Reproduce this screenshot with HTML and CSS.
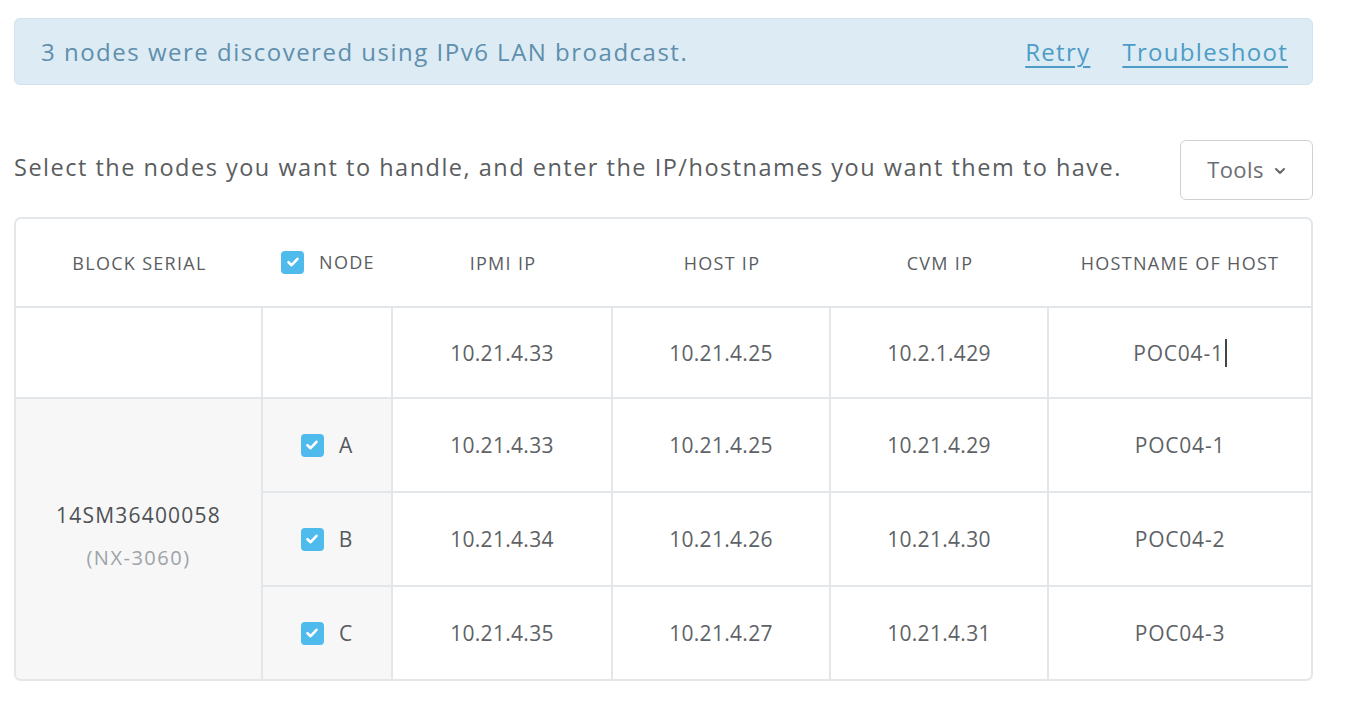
FILE: index.html
```html
<!DOCTYPE html>
<html>
<head>
<meta charset="utf-8">
<link rel="stylesheet" href="styles.css">
</head>
<body>
<div class="page">
  <div class="banner">
    <span class="banner-text">3 nodes were discovered using IPv6 LAN broadcast.</span>
    <div class="banner-links">
      <a class="link" href="#">Retry</a>
      <a class="link" href="#">Troubleshoot</a>
    </div>
  </div>
  <div class="toolbar">
    <p class="intro">Select the nodes you want to handle, and enter the IP/hostnames you want them to have.</p>
    <button class="tools-btn">Tools
      <svg class="chev" width="12" height="8" viewBox="0 0 12 8"><path d="M2 2 L6 6 L10 2" fill="none" stroke="#666" stroke-width="2" stroke-linecap="round" stroke-linejoin="round"/></svg>
    </button>
  </div>
  <div class="table-wrap">
    <table class="nodes">
      <colgroup>
        <col class="c-block"><col class="c-node"><col class="c-ipmi"><col class="c-host"><col class="c-cvm"><col class="c-name">
      </colgroup>
      <thead>
        <tr>
          <th>BLOCK SERIAL</th>
          <th><span class="node-head"><span class="cb"><svg width="16" height="16" viewBox="0 0 16 16"><path d="M3.5 8.2 L6.6 11.2 L12.5 4.8" fill="none" stroke="#fff" stroke-width="2.6" stroke-linecap="round" stroke-linejoin="round"/></svg></span>NODE</span></th>
          <th>IPMI IP</th>
          <th>HOST IP</th>
          <th>CVM IP</th>
          <th>HOSTNAME OF HOST</th>
        </tr>
      </thead>
      <tbody>
        <tr class="first">
          <td></td>
          <td></td>
          <td class="ip">10.21.4.33</td>
          <td class="ip">10.21.4.25</td>
          <td class="ip">10.2.1.429</td>
          <td class="last"><span class="editing">POC04-1</span></td>
        </tr>
        <tr>
          <td class="block" rowspan="3"><div class="serial">14SM36400058</div><div class="model">(NX-3060)</div></td>
          <td class="node"><span class="node-cell"><span class="cb"><svg width="16" height="16" viewBox="0 0 16 16"><path d="M3.5 8.2 L6.6 11.2 L12.5 4.8" fill="none" stroke="#fff" stroke-width="2.6" stroke-linecap="round" stroke-linejoin="round"/></svg></span>A</span></td>
          <td class="ip">10.21.4.33</td>
          <td class="ip">10.21.4.25</td>
          <td class="ip">10.21.4.29</td>
          <td class="last">POC04-1</td>
        </tr>
        <tr>
          <td class="node"><span class="node-cell"><span class="cb"><svg width="16" height="16" viewBox="0 0 16 16"><path d="M3.5 8.2 L6.6 11.2 L12.5 4.8" fill="none" stroke="#fff" stroke-width="2.6" stroke-linecap="round" stroke-linejoin="round"/></svg></span>B</span></td>
          <td class="ip">10.21.4.34</td>
          <td class="ip">10.21.4.26</td>
          <td class="ip">10.21.4.30</td>
          <td class="last">POC04-2</td>
        </tr>
        <tr class="bottom">
          <td class="node"><span class="node-cell"><span class="cb"><svg width="16" height="16" viewBox="0 0 16 16"><path d="M3.5 8.2 L6.6 11.2 L12.5 4.8" fill="none" stroke="#fff" stroke-width="2.6" stroke-linecap="round" stroke-linejoin="round"/></svg></span>C</span></td>
          <td class="ip">10.21.4.35</td>
          <td class="ip">10.21.4.27</td>
          <td class="ip">10.21.4.31</td>
          <td class="last">POC04-3</td>
        </tr>
      </tbody>
    </table>
  </div>
</div>
</body>
</html>
```

FILE: styles.css
```css
html, body {
  margin: 0;
  padding: 0;
  background: #ffffff;
}
body {
  font-family: "Open Sans", Lato, "Liberation Sans", sans-serif;
  color: #555a5e;
}
.page {
  width: 1299px;
  padding: 18px 0 0 14px;
}
.banner {
  box-sizing: border-box;
  height: 67px;
  display: flex;
  align-items: center;
  justify-content: space-between;
  padding: 0 24px 0 26px;
  background: #dcebf4;
  border: 1px solid #cfe4f0;
  border-radius: 6px;
}
.banner-text {
  font-size: 24px;
  color: #5f8fac;
  letter-spacing: 1.5px;
}
.banner-links {
  display: flex;
  gap: 32px;
}
.link {
  font-size: 24px;
  color: #4d9cc6;
  letter-spacing: 1.3px;
  text-decoration: underline;
  text-decoration-thickness: 2px;
  text-underline-offset: 5px;
}
.toolbar {
  display: flex;
  align-items: center;
  justify-content: space-between;
  margin-top: 55px;
  height: 60px;
}
.intro {
  margin: 0;
  font-size: 23.5px;
  color: #5a5d60;
  letter-spacing: 1.5px;
  position: relative;
  top: -3px;
}
.tools-btn {
  box-sizing: border-box;
  width: 133px;
  height: 60px;
  background: #fff;
  border: 1.5px solid #cdd2d7;
  border-radius: 6px;
  font-family: inherit;
  font-size: 22px;
  letter-spacing: 0.4px;
  color: #6a6e72;
  display: flex;
  align-items: center;
  justify-content: center;
  gap: 10px;
  padding: 0 0 2px 0;
}
.chev {
  margin-top: 4px;
}
.table-wrap {
  margin-top: 17px;
  border: 2px solid #e4e7ea;
  border-radius: 7px;
  overflow: hidden;
  width: 1295px;
  box-shadow: 0 1px 1px rgba(0,0,0,0.04);
}
.nodes {
  width: 100%;
  border-collapse: separate;
  border-spacing: 0;
  table-layout: fixed;
}
.c-block { width: 247px; }
.c-node { width: 130px; }
.c-ipmi { width: 220px; }
.c-host { width: 218px; }
.c-cvm { width: 218px; }
.c-name { width: 262px; }
.nodes th {
  height: 87px;
  font-weight: 400;
  font-size: 18px;
  color: #5a5d60;
  letter-spacing: 1.3px;
  text-align: center;
  border-bottom: 2px solid #e4e7ea;
  padding: 0;
}
.nodes td {
  text-align: center;
  font-size: 21px;
  letter-spacing: 0.8px;
  color: #5e6266;
  border-right: 2px solid #e4e7ea;
  border-bottom: 2px solid #e4e7ea;
  padding: 0;
  height: 92px;
}
.nodes td.ip {
  letter-spacing: 0.3px;
}
.nodes tr.first td {
  height: 89px;
}
.nodes td.last {
  border-right: none;
}
.nodes tr.bottom td {
  border-bottom: none;
}
.nodes td.block {
  background: #f7f7f7;
  border-bottom: none;
  vertical-align: middle;
}
.nodes td.node {
  background: #f7f7f7;
}
.serial {
  font-size: 21px;
  letter-spacing: 1.2px;
  color: #4e5256;
  position: relative;
  top: -6px;
}
.model {
  font-size: 20px;
  letter-spacing: 1.5px;
  color: #9ea3a8;
  margin-top: 9px;
}
.node-head, .node-cell {
  display: inline-flex;
  align-items: center;
  gap: 15px;
}
.node-cell {
  font-size: 21px;
  color: #55595d;
}
.cb {
  width: 23px;
  height: 23px;
  border-radius: 4px;
  background: #4fbbec;
  display: inline-flex;
  align-items: center;
  justify-content: center;
}
.editing {
  border-right: 2px solid #444;
  padding-right: 1px;
}
```
